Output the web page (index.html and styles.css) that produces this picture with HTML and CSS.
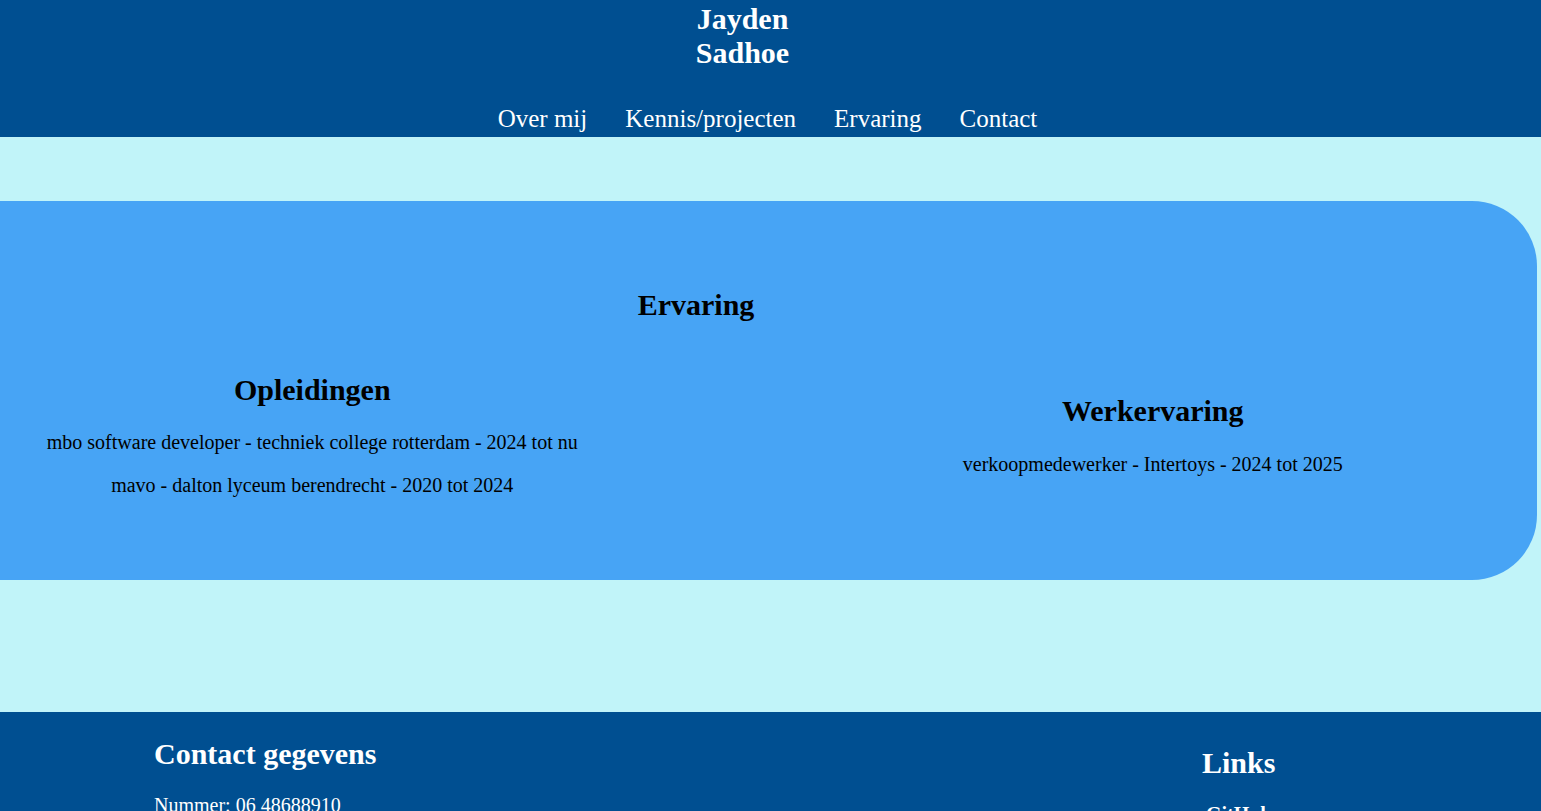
FILE: index.html
```html
<!DOCTYPE html>
<html lang="nl">
<head>
<meta charset="utf-8">
<title>Jayden Sadhoe</title>
<link rel="stylesheet" href="styles.css">
</head>
<body>
<header class="site-header">
  <div class="title-wrap"><h1 class="site-title">Jayden Sadhoe</h1></div>
  <nav class="site-nav">
    <a href="#over">Over mij</a>
    <a href="#kennis">Kennis/projecten</a>
    <a href="#ervaring">Ervaring</a>
    <a href="#contact">Contact</a>
  </nav>
</header>
<main class="page">
  <section class="experience" id="ervaring">
    <h2 class="section-title">Ervaring</h2>
    <div class="columns">
      <div class="col col-left">
        <h2 class="col-title">Opleidingen</h2>
        <p>mbo software developer - techniek college rotterdam - 2024 tot nu</p>
        <p>mavo - dalton lyceum berendrecht - 2020 tot 2024</p>
      </div>
      <div class="col col-right">
        <h2 class="col-title">Werkervaring</h2>
        <p>verkoopmedewerker - Intertoys - 2024 tot 2025</p>
      </div>
    </div>
  </section>
</main>
<footer class="site-footer" id="contact">
  <div class="foot-col">
    <h2 class="foot-title">Contact gegevens</h2>
    <p>Nummer: 06 48688910</p>
  </div>
  <div class="foot-col foot-links">
    <h2 class="foot-title">Links</h2>
    <p class="link-item">GitHub</p>
  </div>
</footer>
</body>
</html>
```
FILE: styles.css
```css
html, body {
  margin: 0;
  padding: 0;
}
body {
  font-family: "Liberation Serif", "Times New Roman", serif;
  background: #c1f4f9;
  color: #000;
}
.site-header {
  background: #004f91;
  color: #fff;
  text-align: center;
  padding: 2px 0 3px;
  height: 137px;
  box-sizing: border-box;
}
.title-wrap {
  display: flex;
  justify-content: center;
  padding-right: 56px;
}
.site-title {
  margin: 0;
  width: 110px;
  font-size: 30px;
  line-height: 34px;
  font-weight: bold;
}
.site-nav {
  display: flex;
  justify-content: center;
  gap: 38px;
  margin-top: 34px;
  padding-right: 6px;
  font-size: 25px;
  line-height: 29px;
}
.site-nav a {
  color: #fff;
  text-decoration: none;
}
.page {
  padding: 64px 4px 132px 0;
}
.experience {
  background: #47a4f5;
  border-radius: 0 65px 65px 0;
  padding: 87px 0 83px;
  height: 379px;
  box-sizing: border-box;
}
.section-title {
  margin: 0;
  font-size: 30px;
  line-height: 34.5px;
  text-align: center;
  padding-right: 145px;
}
.columns {
  display: grid;
  grid-template-columns: 1fr 1fr;
  align-items: center;
  margin-top: 50px;
  text-align: center;
}
.col-left {
  padding-right: 144px;
}
.col-title {
  margin: 0 0 24px;
  font-size: 30px;
  line-height: 34.5px;
}
.col p {
  margin: 0;
  font-size: 20px;
  line-height: 23px;
}
.col p + p {
  margin-top: 20px;
}
.site-footer {
  background: #004f91;
  color: #fff;
  display: flex;
  justify-content: space-between;
  padding: 25px 0 0 154px;
  height: 99px;
  box-sizing: border-box;
  overflow: hidden;
}
.foot-col {
  display: flex;
  flex-direction: column;
}
.foot-links {
  margin-top: 9px;
  width: 339px;
}
.foot-title {
  margin: 0 0 22px;
  font-size: 30px;
  line-height: 34.5px;
}
.foot-col p {
  margin: 0;
  font-size: 20px;
  line-height: 23px;
}
.link-item {
  font-weight: bold;
  padding-left: 4px;
}
```
